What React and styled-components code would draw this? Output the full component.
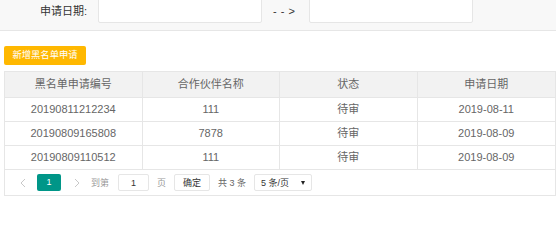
import React from "react";
import styled, { createGlobalStyle } from "styled-components";

//........Global page..................
const GlobalStyle = createGlobalStyle`
  html, body {
    margin: 0;
    padding: 0;
    background: #fff;
    overflow: hidden;
  }
  body {
    font-family: "Liberation Sans", "Noto Sans CJK SC", sans-serif;
    color: #666;
  }
`;

//........Search bar...................
const SearchBar = styled.div`
  display: flex;
  align-items: flex-start;
  height: 38px;
  margin-top: -8px;
  background-color: #f8f8f8;
  border-bottom: 1px solid #e6e6e6;
`;
const Label = styled.span`
  margin: 8px 11px 0 40px;
  line-height: 22px;
  font-size: 11px;
  color: #333;
  white-space: nowrap;
`;
const DateInput = styled.div`
  box-sizing: border-box;
  width: 164px;
  height: 31px;
  background: #fff;
  border: 1px solid #e6e6e6;
  border-radius: 2px;
`;
const Arrow = styled.span`
  margin: 8px 10px 0 11px;
  line-height: 22px;
  font-size: 11px;
  letter-spacing: 4px;
  color: #333;
`;

//........Toolbar......................
const Toolbar = styled.div`
  padding: 13px 0 6px 4px;
`;
const WarmButton = styled.button`
  height: 19px;
  width: 82px;
  padding: 0;
  border: none;
  border-radius: 2px;
  background-color: #ffb800;
  color: #fff;
  font-family: inherit;
  font-size: 9.3px;
  line-height: 19px;
  cursor: pointer;
`;

//........Table........................
const TableBox = styled.div`
  margin-left: 4px;
  width: 552px;
  box-sizing: border-box;
  border: 1px solid #e6e6e6;
  border-bottom: none;
`;
const Grid = styled.div`
  display: grid;
  grid-template-columns: repeat(4, 1fr);
`;
const Cell = styled.div`
  height: ${(p) => (p.$head ? "25px" : "23px")};
  line-height: ${(p) => (p.$head ? "25px" : "23px")};
  text-align: center;
  font-size: 11px;
  color: #666;
  background-color: ${(p) => (p.$head ? "#f2f2f2" : "#fff")};
  border-bottom: 1px solid #e6e6e6;
  border-right: ${(p) => (p.$last ? "none" : "1px solid #e6e6e6")};
`;

//........Pager........................
const Pager = styled.div`
  display: flex;
  align-items: center;
  height: 25px;
  padding-left: 14px;
  border-bottom: 1px solid #e6e6e6;
  font-size: 9px;
`;
const Chevron = styled.svg`
  margin-left: ${(p) => p.$ml || 0}px;
  width: 6px;
  height: 10px;
`;
const Current = styled.span`
  margin-left: ${(p) => p.$ml || 0}px;
  width: 24px;
  height: 17px;
  line-height: 17px;
  text-align: center;
  border-radius: 2px;
  background-color: #009688;
  color: #fff;
`;
const PageText = styled.span`
  margin-left: ${(p) => p.$ml || 0}px;
  color: ${(p) => p.$color || "#999"};
  white-space: pre;
`;
const PageBox = styled.span`
  box-sizing: border-box;
  display: flex;
  align-items: center;
  justify-content: ${(p) => (p.$spread ? "space-between" : "center")};
  margin-left: ${(p) => p.$ml || 0}px;
  width: ${(p) => p.$w}px;
  height: 17px;
  padding: ${(p) => (p.$spread ? "0 6px" : "0")};
  border: 1px solid #e6e6e6;
  border-radius: 2px;
  background: #fff;
  color: #333;
`;
const Caret = styled.span`
  width: 0;
  height: 0;
  border-left: 2.5px solid transparent;
  border-right: 2.5px solid transparent;
  border-top: 4px solid #222;
`;

const rows = [
  ["20190811212234", "111", "待审", "2019-08-11"],
  ["20190809165808", "7878", "待审", "2019-08-09"],
  ["20190809110512", "111", "待审", "2019-08-09"],
];
const heads = ["黑名单申请编号", "合作伙伴名称", "状态", "申请日期"];

function ChevronIcon({ dir, ml }) {
  const d = dir === "left" ? "M5 1 L1 5 L5 9" : "M1 1 L5 5 L1 9";
  return (
    <Chevron $ml={ml} viewBox="0 0 6 10">
      <path d={d} fill="none" stroke="#c8c8c8" strokeWidth="1" />
    </Chevron>
  );
}

//.....JSX code...........................
function App() {
  return (
    <>
      <GlobalStyle />
      <SearchBar>
        <Label>申请日期:</Label>
        <DateInput />
        <Arrow>--&gt;</Arrow>
        <DateInput />
      </SearchBar>
      <Toolbar>
        <WarmButton>新增黑名单申请</WarmButton>
      </Toolbar>
      <TableBox>
        <Grid>
          {heads.map((h, i) => (
            <Cell key={h} $head $last={i === 3}>
              {h}
            </Cell>
          ))}
          {rows.map((r) =>
            r.map((c, i) => (
              <Cell key={r[0] + i} $last={i === 3}>
                {c}
              </Cell>
            ))
          )}
        </Grid>
        <Pager>
          <ChevronIcon dir="left" ml={1} />
          <Current $ml={11}>1</Current>
          <ChevronIcon dir="right" ml={13} />
          <PageText $ml={11}>到第</PageText>
          <PageBox $ml={9} $w={31}>1</PageBox>
          <PageText $ml={8}>页</PageText>
          <PageBox $ml={8} $w={36}>确定</PageBox>
          <PageText $ml={8} $color="#666">共 3 条</PageText>
          <PageBox $ml={8} $w={58} $spread>
            <span>5 条/页</span>
            <Caret />
          </PageBox>
        </Pager>
      </TableBox>
    </>
  );
}

export default App;
